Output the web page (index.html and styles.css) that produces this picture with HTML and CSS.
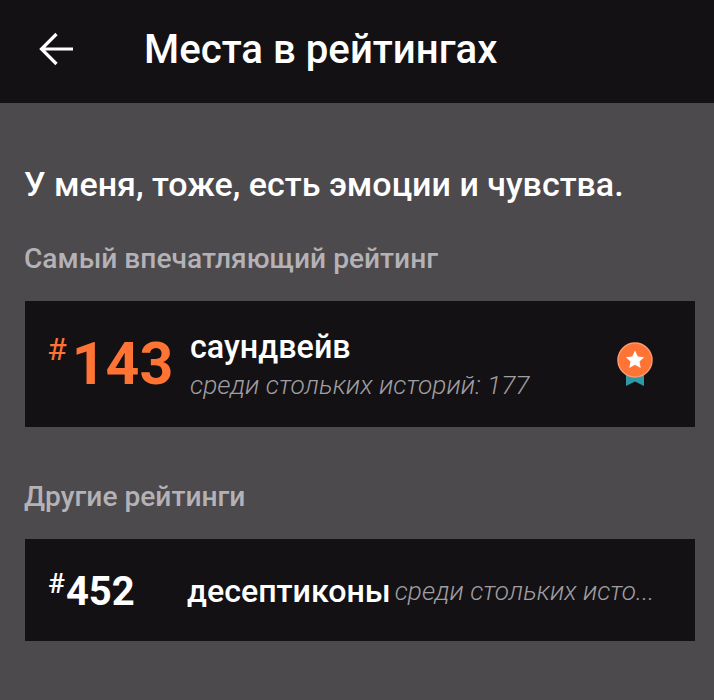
FILE: index.html
```html
<!DOCTYPE html>
<html lang="ru">
<head>
<meta charset="utf-8">
<title>Места в рейтингах</title>
<link rel="stylesheet" href="styles.css">
</head>
<body>
<header class="topbar">
  <svg class="back" width="36" height="36" viewBox="0 0 36 36" fill="none" stroke="#fff" stroke-width="3.2"><path d="M35 18H4M18.500 3 3.500 18l15 15"/></svg>
  <h1 class="title">Места в рейтингах</h1>
</header>
<main class="content">
  <h2 class="story">У меня, тоже, есть эмоции и чувства.</h2>
  <h3 class="label">Самый впечатляющий рейтинг</h3>
  <section class="card card-top">
    <div class="rank rank-top"><span class="hash">#</span><span class="num">143</span></div>
    <div class="info">
      <div class="tag">саундвейв</div>
      <div class="sub">среди стольких историй: 177</div>
    </div>
    <svg class="medal" width="38" height="46" viewBox="0 0 38 46">
      <path d="M10 26h18v19l-9-4.500-9 4.500z" fill="#2e9aa8"/>
      <circle cx="19" cy="19" r="17" fill="#ff7335" stroke="#fb9a6e" stroke-width="1.500"/>
      <path d="M19 9.500l2.800 5.900 6.400.8-4.700 4.400 1.200 6.400-5.700-3.200-5.700 3.200 1.200-6.400-4.700-4.400 6.400-.8z" fill="#fff"/>
    </svg>
  </section>
  <h3 class="label label-other">Другие рейтинги</h3>
  <section class="card card-other">
    <div class="rank rank-other"><span class="hash">#</span><span class="num">452</span></div>
    <div class="tag">десептиконы</div>
    <div class="sub sub-trunc">среди стольких исто...</div>
  </section>
</main>
</body>
</html>
```
FILE: styles.css
```css
* { box-sizing: border-box; margin: 0; padding: 0; }
html, body { height: 100%; }
body { background: #4c4a4d; font-family: Roboto, "Noto Sans", sans-serif; color: #fff; overflow: hidden; }
.topbar { height: 103px; background: #131114; display: flex; align-items: center; padding-left: 38px; }
.back { flex: none; margin-top: -6px; }
.title { font-size: 40.2px; font-weight: 500; margin-left: 70px; margin-top: -4px; line-height: 44px; }
.content { padding: 61px 19px 0 25px; }
.story { font-size: 34px; font-weight: 500; line-height: 40px; margin-left: -1px; }
.label { font-size: 28.15px; font-weight: 500; color: #b4b2b6; line-height: 32px; margin-top: 39px; margin-left: -1px; }
.label-other { margin-top: 54px; }
.card { background: #131114; display: flex; align-items: center; margin-top: 26px; padding-left: 23px; }
.card-top { height: 126px; }
.card-other { height: 102px; }
.rank { display: flex; flex: none; }
.rank-top { width: 142px; color: #ff7335; }
.rank-other { width: 139px; }
.hash { font-weight: 400; line-height: 32px; }
.rank-top .hash { font-size: 32px; margin-top: 4px; margin-left: -1px; }
.rank-other .hash { font-size: 28px; font-weight: 500; margin-top: 4px; }
.num { font-weight: 700; }
.rank-top .num { font-size: 59px; line-height: 70px; margin-left: 5px; }
.rank-other .num { font-size: 40px; line-height: 48px; margin-left: 1px; margin-top: 4px; }
.info { flex: 1; display: flex; flex-direction: column; margin-top: 1px; }
.tag { font-size: 32.3px; font-weight: 500; line-height: 36px; }
.card-other .tag { font-size: 32.2px; margin-top: 2px; }
.sub { font-size: 26.3px; font-weight: 300; font-style: italic; color: #a09ea2; line-height: 32px; margin-top: 4px; }
.sub-trunc { margin-top: 2px; margin-left: 4px; font-size: 26.2px; white-space: nowrap; }
.medal { flex: none; margin-right: 41px; }
```
